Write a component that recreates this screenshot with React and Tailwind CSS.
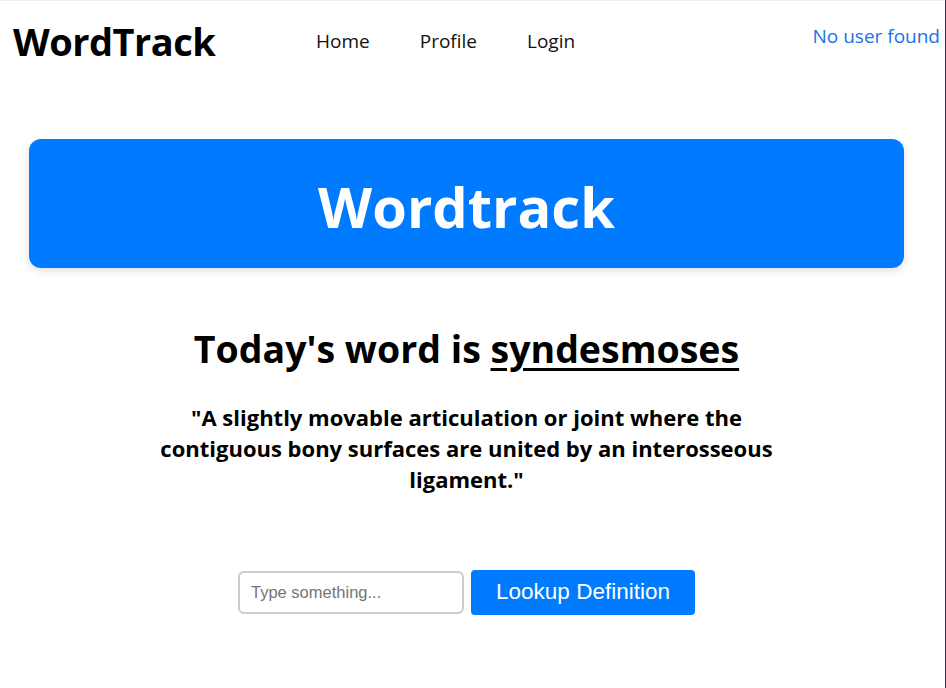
import React, { useState } from "react";

const Navbar = () => (
  <nav className="flex items-center h-[80px] border-t border-[#eeeeee]">
    <div className="pl-[13px] w-[316px] text-[38px] font-bold text-black leading-none tracking-[-0.5px]">WordTrack</div>
    <div className="flex items-center gap-[50px] text-[19px] text-[#111] pt-[2px]">
      <a href="#">Home</a>
      <a href="#">Profile</a>
      <a href="#">Login</a>
    </div>
    <div className="ml-auto pr-[5px] text-[19px] font-medium text-[#1a73e8] pb-[8px] whitespace-nowrap">No user found</div>
  </nav>
);

export default function App() {
  const [word, setWord] = useState("");

  return (
    <div className="min-h-screen bg-white font-['Open_Sans',sans-serif] text-black border-r border-[#3b2a6a] overflow-hidden">
      <Navbar />
      <main className="w-[933px] flex flex-col items-center">
        <div className="mt-[59px] w-[875px] h-[129px] rounded-[12px] bg-[#007bff] shadow-[0_3px_8px_rgba(0,0,0,0.12)] flex items-center justify-center">
          <h1 className="pt-[4px] text-[56px] font-bold text-white leading-none">Wordtrack</h1>
        </div>

        <h2 className="mt-[62px] text-[37.5px] font-bold leading-none">
          Today's word is <span className="underline underline-offset-[5px] decoration-[3px]">syndesmoses</span>
        </h2>

        <p className="mt-[34px] w-[640px] text-center text-[22px] font-bold leading-[31px]">
          "A slightly movable articulation or joint where the contiguous bony surfaces are united by an interosseous ligament."
        </p>

        <form
          className="mt-[75px] flex items-center gap-[7px]"
          onSubmit={(e) => e.preventDefault()}
        >
          <input
            type="text"
            value={word}
            onChange={(e) => setWord(e.target.value)}
            placeholder="Type something..."
            className="w-[226px] h-[43px] px-[11px] border-2 border-[#cccccc] rounded-[6px] font-['Liberation_Sans',sans-serif] text-[16.5px] placeholder:text-[#757575] outline-none"
          />
          <button
            type="submit"
            className="w-[224px] h-[45px] rounded-[4px] bg-[#007bff] text-white font-['Liberation_Sans',sans-serif] text-[22.5px]"
          >
            Lookup Definition
          </button>
        </form>
      </main>
    </div>
  );
}
